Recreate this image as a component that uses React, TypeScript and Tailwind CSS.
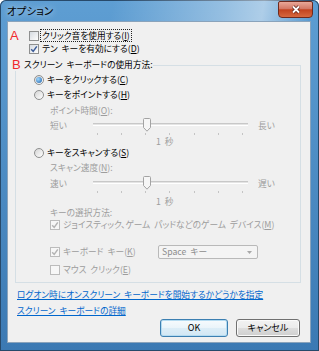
import React from "react";

type BoxProps = { checked?: boolean; disabled?: boolean };

function CheckBox({ checked = false, disabled = false }: BoxProps) {
  return (
    <span
      className={
        disabled
          ? "w-[10px] h-[10px] shrink-0 flex items-center justify-center border border-[#bcbcbc] bg-[#f7f7f7]"
          : "w-[10px] h-[10px] shrink-0 flex items-center justify-center border border-[#8e8f8f] bg-[linear-gradient(135deg,#d6dbe1,#fdfdfd)]"
      }
    >
      {checked && (
        <svg width="8" height="8" viewBox="0 0 8 8">
          <path
            d="M1.2 4.2 L3.2 6.4 L6.8 1.4"
            fill="none"
            stroke={disabled ? "#b4b4b4" : "#3d5c98"}
            strokeWidth="1.5"
          />
        </svg>
      )}
    </span>
  );
}

function Radio({ checked = false }: { checked?: boolean }) {
  return (
    <span className="w-[10px] h-[10px] shrink-0 rounded-full border border-[#8e8f8f] bg-[linear-gradient(135deg,#d4d4d4,#ffffff)] flex items-center justify-center">
      {checked && (
        <span className="w-[6px] h-[6px] rounded-full bg-[radial-gradient(circle_at_35%_35%,#9fd8ff,#1d5fa8)]" />
      )}
    </span>
  );
}

// mnemonic letter, underlined like the Windows access keys
function Key({ k }: { k: string }) {
  return (
    <>
      (<span className="underline underline-offset-[1px]">{k}</span>)
    </>
  );
}

function Slider({ low, high, mt }: { low: string; high: string; mt: string }) {
  const ticks = [0, 1, 2, 3, 4, 5, 6];
  return (
    <>
      <div className={`flex h-[14px] pl-[34px] text-[#9d9d9d] ${mt}`}>
        <span className="w-[43px] mt-[2px]">{low}</span>
        <div className="relative w-[155px] h-[14px]">
          <div className="mt-[5px] h-[3px] border-t border-[#c8c8c8] border-b border-b-white bg-[#e4e4e4]" />
          <svg
            className="absolute left-[50px] top-0"
            width="8"
            height="14"
            viewBox="0 0 8 14"
          >
            <path
              d="M1.5 0.5 H6.5 Q7.5 0.5 7.5 1.5 V9.5 L4 13.2 L0.5 9.5 V1.5 Q0.5 0.5 1.5 0.5 Z"
              fill="#f6f6f6"
              stroke="#a3a3a3"
            />
          </svg>
        </div>
        <span className="ml-[10px] mt-[2px]">{high}</span>
      </div>
      <div className="mt-[1px] ml-[81px] w-[146px] h-[2px] flex justify-between">
        {ticks.map((t) => (
          <span key={t} className="w-[1px] h-[2px] bg-[#c4c4c4]" />
        ))}
      </div>
    </>
  );
}

export default function App() {
  return (
    <div className="w-[319px] h-[351px] flex flex-col rounded-t-[6px] overflow-hidden bg-[linear-gradient(180deg,#5e9ed3,#3b79b3)] shadow-[inset_0_0_0_1px_#27496a] font-['Noto_Sans_CJK_JP',sans-serif] [font-feature-settings:'palt'] [word-spacing:2px]">
      {/* title bar */}
      <div className="h-[21px] flex items-start justify-between pl-[7px] pr-[6px] bg-[linear-gradient(100deg,rgba(255,255,255,0)_35%,rgba(255,255,255,0.35)_70%,rgba(255,255,255,0.5)_82%,rgba(255,255,255,0)_97%)]">
        <span className="mt-[4px] text-[10.5px] leading-[14px] text-black [text-shadow:0_0_6px_rgba(255,255,255,0.9)]">
          オプション
        </span>
        <div className="mt-[1px] w-[35px] h-[17px] rounded-b-[4px] rounded-t-[2px] border border-[#6e2a1f] bg-[linear-gradient(180deg,#e9a898,#d37865_45%,#c2431f_52%,#d6683f)] flex items-center justify-center">
          <svg width="10" height="9" viewBox="0 0 10 9">
            <path d="M2 1.5 L8 7.5 M8 1.5 L2 7.5" stroke="#5a1d14" strokeWidth="3.2" />
            <path d="M2 1.5 L8 7.5 M8 1.5 L2 7.5" stroke="#ffffff" strokeWidth="1.8" />
          </svg>
        </div>
      </div>

      {/* client area */}
      <div className="ml-[7px] mr-[8px] mb-[8px] flex-1 border border-[#8aa3bb] bg-[#f0f0f0] flex flex-col pt-[7px] text-[8.7px] leading-[12px] text-black">
        <div className="flex h-[13px] items-center pl-[2px]">
          <span className="w-[19px] font-['Liberation_Sans',sans-serif] text-[13px] leading-[13px] text-[#f0282d]">
            A
          </span>
          <CheckBox />
          <span className="ml-[1px] px-[1px] border border-dotted border-[#222] leading-[11px]">
            クリック音を使用する<Key k="I" />
          </span>
        </div>
        <div className="flex h-[13px] items-center pl-[21px]">
          <CheckBox checked />
          <span className="ml-[3px]">
            テン キーを有効にする<Key k="D" />
          </span>
        </div>

        <fieldset className="mt-[4px] ml-[7px] w-[286px] border border-[#d5dfe5] pb-[6px]">
          <legend className="-ml-[4px] h-[12px] flex items-center">
            <span className="w-[12px] font-['Liberation_Sans',sans-serif] text-[13px] leading-[12px] text-[#f0282d]">
              B
            </span>
            スクリーン キーボードの使用方法:
          </legend>

          <div className="mt-[3px] h-[12px] flex items-center pl-[18px]">
            <Radio checked />
            <span className="ml-[3px]">
              キーをクリックする<Key k="C" />
            </span>
          </div>
          <div className="mt-[3px] h-[12px] flex items-center pl-[18px]">
            <Radio />
            <span className="ml-[3px]">
              キーをポイントする<Key k="H" />
            </span>
          </div>
          <div className="mt-[4px] h-[12px] pl-[34px] text-[#9d9d9d]">
            ポイント時間<Key k="O" />:
          </div>
          <Slider low="短い" high="長い" mt="mt-[1px]" />
          <div className="mt-[2px] h-[10px] leading-[10px] pl-[140px] text-[#9d9d9d]">1 秒</div>

          <div className="h-[12px] flex items-center pl-[18px]">
            <Radio />
            <span className="ml-[3px]">
              キーをスキャンする<Key k="S" />
            </span>
          </div>
          <div className="mt-[3px] h-[12px] pl-[34px] text-[#9d9d9d]">
            スキャン速度<Key k="N" />:
          </div>
          <Slider low="速い" high="遅い" mt="mt-[2px]" />
          <div className="mt-[4px] h-[10px] leading-[10px] pl-[140px] text-[#9d9d9d]">1 秒</div>

          <div className="h-[12px] pl-[34px] text-[#9d9d9d]">キーの選択方法:</div>
          <div className="h-[12px] flex items-center pl-[34px] text-[#9d9d9d]">
            <CheckBox checked disabled />
            <span className="ml-[3px]">
              ジョイスティック、ゲーム パッドなどのゲーム デバイス<Key k="M" />
            </span>
          </div>
          <div className="mt-[14px] h-[14px] flex items-center pl-[34px] text-[#9d9d9d]">
            <div className="w-[108px] flex items-center">
              <CheckBox checked disabled />
              <span className="ml-[3px]">
                キーボード キー<Key k="K" />
              </span>
            </div>
            <div className="w-[100px] h-[14px] flex items-center justify-between pl-[3px] pr-[5px] border border-[#b9b9b9] rounded-[2px] bg-[#f4f4f4] text-[#8c8c8c]">
              <span>Space キー</span>
              <svg width="5" height="3" viewBox="0 0 5 3">
                <path d="M0 0 H5 L2.5 3 Z" fill="#a8a8a8" />
              </svg>
            </div>
          </div>
          <div className="mt-[5px] h-[12px] flex items-center pl-[34px] text-[#9d9d9d]">
            <CheckBox disabled />
            <span className="ml-[3px]">
              マウス クリック<Key k="E" />
            </span>
          </div>
        </fieldset>

        <div className="mt-[6px] h-[12px] pl-[9px] text-[#0066cc] underline underline-offset-[1px]">
          ログオン時にオンスクリーン キーボードを開始するかどうかを指定
        </div>
        <div className="mt-[4px] h-[12px] pl-[9px] text-[#0066cc] underline underline-offset-[1px]">
          スクリーン キーボードの詳細
        </div>

        <div className="mt-[2px] flex justify-end gap-[8px] pr-[10px]">
          <button className="w-[68px] h-[18px] rounded-[3px] border border-[#3c7fb1] bg-[linear-gradient(180deg,#f7fbfd,#eaf4fa_50%,#dcedf7_51%,#d2e7f4)] shadow-[inset_0_0_0_1px_#b4dbf1] text-[9px] leading-[12px] text-black">
            OK
          </button>
          <button className="w-[64px] h-[18px] rounded-[3px] border border-[#707070] bg-[linear-gradient(180deg,#f2f2f2,#ebebeb_50%,#dddddd_51%,#cfcfcf)] shadow-[inset_0_0_0_1px_#fafafa] text-[9px] leading-[12px] text-black">
            キャンセル
          </button>
        </div>
      </div>
    </div>
  );
}
